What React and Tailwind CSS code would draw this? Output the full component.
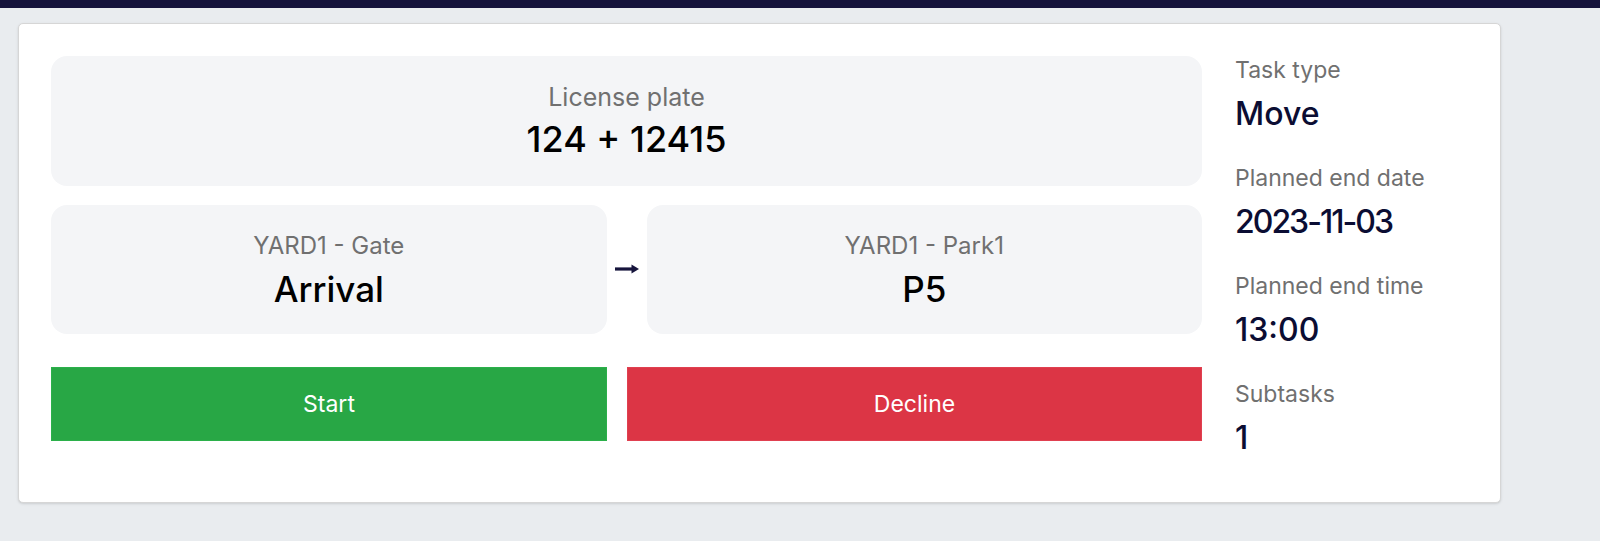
import React from 'react';

const details = [
  { label: 'Task type', value: 'Move', tight: false },
  { label: 'Planned end date', value: '2023-11-03', tight: true },
  { label: 'Planned end time', value: '13:00', tight: false },
  { label: 'Subtasks', value: '1', tight: false },
];

const LocationBox = ({ label, value }) => (
  <div className="flex-1 h-[129px] rounded-2xl bg-[#f4f5f7] flex flex-col items-center pt-[26px]">
    <div className="text-[24px] leading-[30px] text-[#707070]">{label}</div>
    <div className="mt-[6px] text-[35px] leading-[44px] font-medium text-black">{value}</div>
  </div>
);

const App = () => {
  return (
    <div className="min-h-screen bg-[#e9ecef] font-['Inter',sans-serif]">
      <div className="h-2 bg-[#16143c]" />
      <div className="pt-[15px] pl-[18px] w-[1501px]">
        <div className="bg-white border border-[#d6d6d6] rounded-[5px] shadow-sm p-8 pb-[44px] flex items-start gap-[33px]">
          {/* left side */}
          <div className="w-[1151px] flex flex-col">
            <div className="h-[130px] rounded-2xl bg-[#f4f5f7] flex flex-col items-center pt-[26px]">
              <div className="text-[25px] leading-[30px] text-[#707070]">License plate</div>
              <div className="mt-[5px] text-[36px] leading-[44px] font-medium text-black">124 + 12415</div>
            </div>

            <div className="mt-[19px] flex items-center">
              <LocationBox label="YARD1 - Gate" value="Arrival" />
              <div className="w-10 flex justify-center pb-[2px]">
                <svg width="26" height="10" viewBox="0 0 26 10">
                  <path d="M1 5h18" stroke="#16143c" strokeWidth="3.2" />
                  <path d="M17.5 0.5l7.5 4.5-7.5 4.5z" fill="#16143c" />
                </svg>
              </div>
              <LocationBox label="YARD1 - Park1" value="P5" />
            </div>

            <div className="mt-[33px] flex gap-5">
              <button className="w-[556px] h-[74px] bg-[#28a745] border border-[#2bb04a] text-white text-[23px]">
                Start
              </button>
              <button className="flex-1 h-[74px] bg-[#dc3545] border border-[#e04050] text-white text-[23px]">
                Decline
              </button>
            </div>
          </div>

          {/* right side */}
          <div className="flex-1 flex flex-col gap-[30px]">
            {details.map((d) => (
              <div key={d.label}>
                <div className="text-[23px] leading-[28px] text-[#707070]">{d.label}</div>
                <div
                  className={
                    d.tight
                      ? 'mt-[10px] text-[32px] leading-[40px] font-medium text-[#0b0d33] tracking-[-2px]'
                      : 'mt-[10px] text-[32px] leading-[40px] font-medium text-[#0b0d33]'
                  }
                >
                  {d.value}
                </div>
              </div>
            ))}
          </div>
        </div>
      </div>
    </div>
  );
};

export default App;
